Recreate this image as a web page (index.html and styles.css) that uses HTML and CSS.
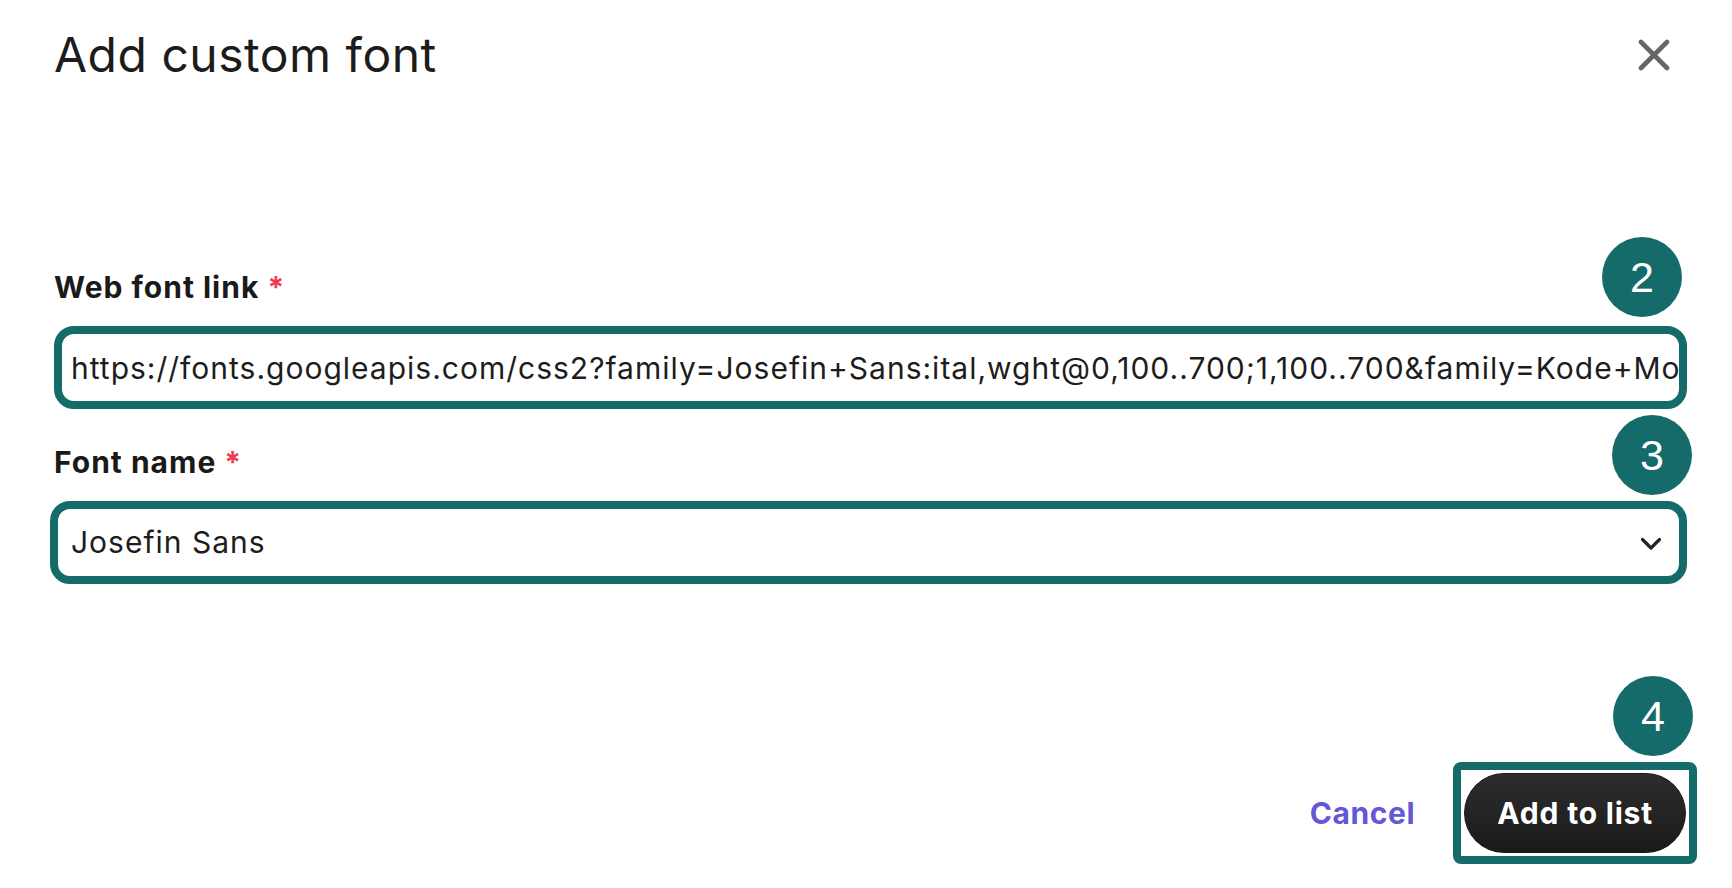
FILE: index.html
```html
<!DOCTYPE html>
<html lang="en">
<head>
<meta charset="utf-8">
<title>Add custom font</title>
<link rel="stylesheet" href="styles.css">
</head>
<body>
<div class="dialog">
  <header class="head">
    <h1 class="title">Add custom font</h1>
    <button class="close" aria-label="Close">
      <svg width="32" height="32" viewBox="0 0 32 32"><path d="M3 3 L29 29 M29 3 L3 29" stroke="#666" stroke-width="4.6" stroke-linecap="round" fill="none"/></svg>
    </button>
  </header>

  <div class="field field-link">
    <label class="label">Web font link <span class="req">*</span></label>
    <div class="box input">https://fonts.googleapis.com/css2?family=Josefin+Sans:ital,wght@0,100..700;1,100..700&amp;family=Kode+Mono:wght@400..700&amp;display=swap</div>
  </div>

  <div class="field field-name">
    <label class="label">Font name <span class="req">*</span></label>
    <div class="box select">
      <span class="value">Josefin Sans</span>
      <svg class="chev" width="22" height="14" viewBox="0 0 22 14"><path d="M2.5 2.5 L11 11 L19.5 2.5" stroke="#1f2430" stroke-width="3.2" stroke-linecap="round" stroke-linejoin="round" fill="none"/></svg>
    </div>
  </div>

  <footer class="foot">
    <a class="cancel">Cancel</a>
    <div class="outline"><button class="primary">Add to list</button></div>
  </footer>
</div>

<span class="badge b2">2</span>
<span class="badge b3">3</span>
<span class="badge b4">4</span>
</body>
</html>
```

FILE: styles.css
```css
* { box-sizing: border-box; }
html, body { margin: 0; padding: 0; background: #fff; }
body {
  width: 1732px;
  height: 888px;
  overflow: hidden;
  position: relative;
  font-family: Inter, "Noto Sans", sans-serif;
  color: #1c1c1c;
}
.dialog {
  padding: 0 45px 0 54px;
}
.head {
  display: flex;
  align-items: center;
  justify-content: space-between;
  padding-top: 26px;
}
.title {
  margin: 0;
  font-family: Inter, sans-serif;
  font-weight: 400;
  font-size: 48px;
  line-height: 58px;
  color: #1c1c1c;
  letter-spacing: 0.5px;
}
.close {
  width: 50px;
  height: 50px;
  margin-right: 8px;
  border: 0;
  padding: 0;
  background: none;
  display: flex;
  align-items: center;
  justify-content: center;
}
.field { display: flex; flex-direction: column; }
.field-link { margin-top: 186px; }
.field-name { margin-top: 36px; }
.label {
  font-family: Inter, sans-serif;
  font-weight: 700;
  font-size: 30px;
  line-height: 35px;
  color: #1a1a1a;
  margin-bottom: 21px;
  letter-spacing: 1px;
}
.req { color: #ef3a52; font-weight: 700; }
.box {
  height: 83px;
  border: 8px solid #146b6a;
  border-radius: 20px;
  display: flex;
  align-items: center;
  font-family: Inter, sans-serif;
  font-size: 30px;
  letter-spacing: 1px;
  color: #1d1d1d;
  background: #fff;
}
.input {
  padding-left: 9px;
  white-space: nowrap;
  overflow: hidden;
}
.select {
  margin-left: -4px;
  padding: 0 17px 0 13px;
  justify-content: space-between;
}
.value { line-height: 35px; }
.chev { display: block; margin-top: 2px; }
.foot {
  margin-top: 178px;
  margin-right: -10px;
  display: flex;
  justify-content: flex-end;
  align-items: center;
  gap: 38px;
}
.cancel {
  font-family: Inter, sans-serif;
  font-weight: 700;
  font-size: 30px;
  line-height: 35px;
  color: #6557d6;
  letter-spacing: 0.6px;
}
.outline {
  border: 8px solid #146b6a;
  border-radius: 8px;
  padding: 3px;
}
.primary {
  display: block;
  height: 80px;
  padding: 0 32px;
  border: 1px solid #151515;
  border-radius: 40px;
  background: linear-gradient(#2d2d2d, #1a1a1a);
  color: #fff;
  font-family: Inter, sans-serif;
  font-weight: 700;
  font-size: 30px;
  line-height: 35px;
  letter-spacing: 0.8px;
}
.badge {
  position: absolute;
  width: 80px;
  height: 80px;
  border-radius: 50%;
  background: #146b6a;
  color: #fff;
  font-family: "Liberation Sans", Arial, sans-serif;
  font-size: 43px;
  line-height: 80px;
  text-align: center;
}
.b2 { left: 1602px; top: 237px; }
.b3 { left: 1612px; top: 415px; }
.b4 { left: 1613px; top: 676px; }
```
